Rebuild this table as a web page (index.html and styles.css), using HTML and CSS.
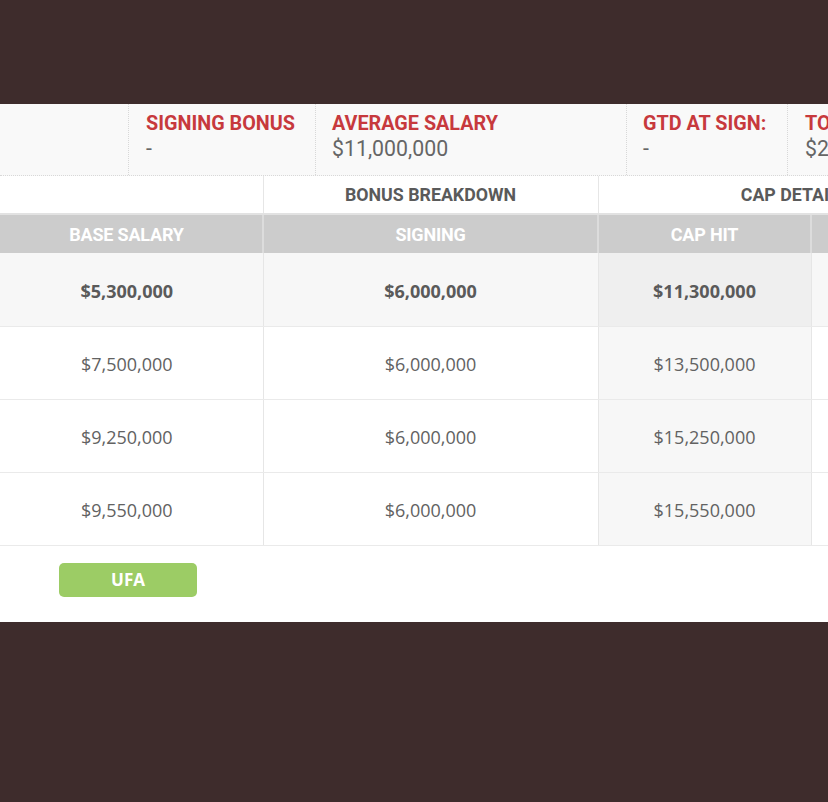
FILE: index.html
```html
<!DOCTYPE html>
<html>
<head>
<meta charset="utf-8">
<link rel="stylesheet" href="styles.css">
</head>
<body>
<div class="panel">
  <div class="stats">
    <div class="stat stat-blank"></div>
    <div class="stat stat-sb">
      <div class="stat-label">SIGNING BONUS</div>
      <div class="stat-value">-</div>
    </div>
    <div class="stat stat-avg">
      <div class="stat-label">AVERAGE SALARY</div>
      <div class="stat-value">$11,000,000</div>
    </div>
    <div class="stat stat-gtd">
      <div class="stat-label">GTD AT SIGN:</div>
      <div class="stat-value">-</div>
    </div>
    <div class="stat stat-total">
      <div class="stat-label">TOTAL GUARANTEED:</div>
      <div class="stat-value">$23,000,000</div>
    </div>
  </div>
  <table class="contract">
    <colgroup>
      <col class="c-base">
      <col class="c-sign">
      <col class="c-cap">
      <col class="c-dead">
    </colgroup>
    <thead>
      <tr class="group-row">
        <th></th>
        <th>BONUS BREAKDOWN</th>
        <th colspan="2">CAP DETAILS</th>
      </tr>
      <tr class="head-row">
        <th>BASE SALARY</th>
        <th>SIGNING</th>
        <th>CAP HIT</th>
        <th>DEAD CAP</th>
      </tr>
    </thead>
    <tbody>
      <tr class="current">
        <td>$5,300,000</td>
        <td>$6,000,000</td>
        <td class="cap">$11,300,000</td>
        <td></td>
      </tr>
      <tr>
        <td>$7,500,000</td>
        <td>$6,000,000</td>
        <td class="cap">$13,500,000</td>
        <td></td>
      </tr>
      <tr>
        <td>$9,250,000</td>
        <td>$6,000,000</td>
        <td class="cap">$15,250,000</td>
        <td></td>
      </tr>
      <tr>
        <td>$9,550,000</td>
        <td>$6,000,000</td>
        <td class="cap">$15,550,000</td>
        <td></td>
      </tr>
      <tr class="foot-row">
        <td><span class="ufa">UFA</span></td>
        <td></td>
        <td></td>
        <td></td>
      </tr>
    </tbody>
  </table>
</div>
</body>
</html>
```

FILE: styles.css
```css
html, body {
  margin: 0;
  padding: 0;
}
body {
  background: #3e2c2c;
  width: 828px;
  height: 802px;
  overflow: hidden;
  font-family: "Open Sans", "Liberation Sans", sans-serif;
}
.panel {
  margin-top: 104px;
  height: 518px;
  background: #ffffff;
  overflow: hidden;
  width: 828px;
}
.stats {
  display: flex;
  height: 71px;
  background: #f9f9f9;
  border-bottom: 1px dotted #d8d8d8;
  width: 1100px;
}
.stat {
  box-sizing: border-box;
  border-right: 1px dotted #d8d8d8;
  padding: 7px 0 0 18px;
  font-family: Roboto, "Liberation Sans", sans-serif;
}
.stat-blank { width: 129px; }
.stat-sb { width: 187px; padding-left: 17px; }
.stat-avg { width: 311px; padding-left: 16px; }
.stat-gtd { width: 161px; padding-left: 16px; }
.stat-total { width: 312px; padding-left: 17px; border-right: none; }
.stat-label {
  color: #c7393d;
  font-weight: 700;
  font-size: 19.8px;
  line-height: 25px;
  white-space: nowrap;
}
.stat-value {
  color: #666666;
  font-size: 21.3px;
  line-height: 25px;
  white-space: nowrap;
}
.contract {
  border-collapse: collapse;
  table-layout: fixed;
  width: 1001px;
  margin-left: -9px;
}
.c-base { width: 272px; }
.c-sign { width: 335px; }
.c-cap { width: 213px; }
.c-dead { width: 181px; }
.contract th, .contract td {
  padding: 0;
  text-align: center;
  border-left: 1px solid #e6e6e6;
}
.contract th:first-child, .contract td:first-child {
  border-left: none;
}
.group-row th {
  height: 37px;
  font-family: Roboto, "Liberation Sans", sans-serif;
  font-weight: 700;
  font-size: 17.8px;
  color: #5a5a5a;
  background: #ffffff;
}
.head-row th {
  height: 38px;
  background: #cccccc;
  color: #ffffff;
  font-family: Roboto, "Liberation Sans", sans-serif;
  font-weight: 700;
  font-size: 18px;
  letter-spacing: -0.2px;
  border-top: 2px solid #e2e2e2;
  border-left: 2px solid #dcdcdc;
}
.head-row th:first-child { border-left: none; }
.contract tbody td {
  height: 73px;
  padding-top: 3px;
  box-sizing: border-box;
  font-size: 18px;
  color: #626262;
  border-bottom: 1px solid #eaeaea;
}
.contract tbody tr.current td {
  background: #f7f7f7;
  font-weight: 700;
  color: #5a5a5a;
}
.contract tbody td.cap {
  background: #f7f7f7;
}
.contract tbody tr.current td.cap {
  background: #efefef;
}
.contract tbody tr.foot-row td {
  height: 76px;
  padding-top: 0;
  border-bottom: none;
  border-left: none;
  vertical-align: top;
  text-align: left;
}
.ufa {
  display: block;
  margin: 17px 0 0 68px;
  width: 138px;
  height: 34px;
  line-height: 34px;
  border-radius: 5px;
  background: #9ccc65;
  color: #ffffff;
  font-weight: 700;
  font-size: 17px;
  text-align: center;
}
```
